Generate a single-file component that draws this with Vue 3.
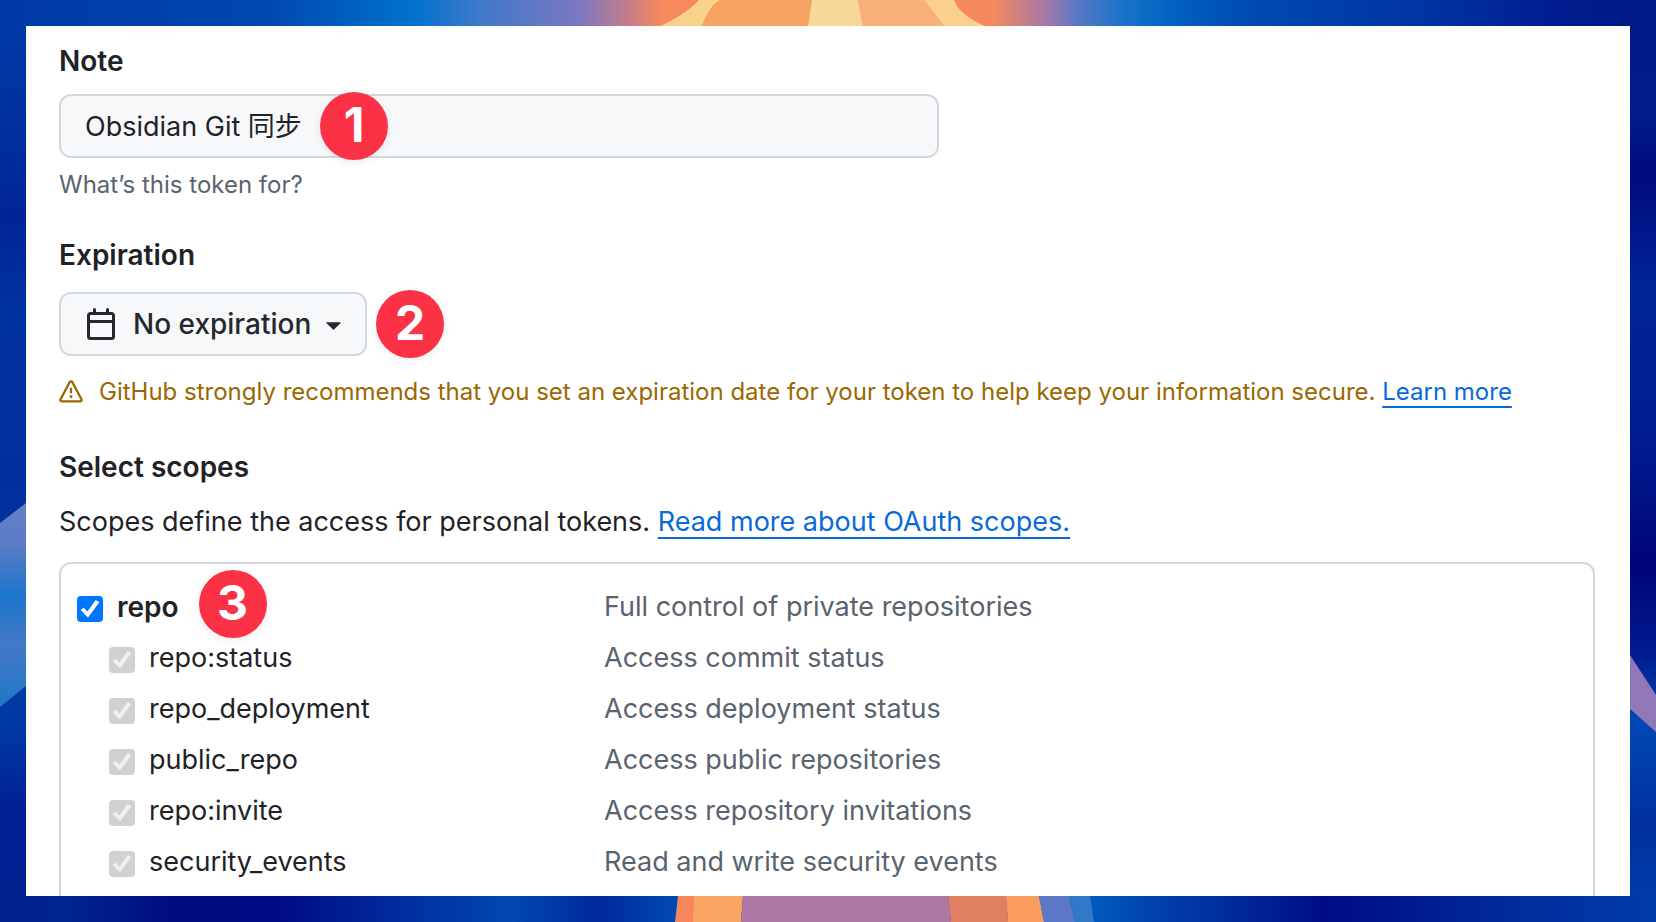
<template>
  <div class="desktop">
    <svg class="wallpaper" viewBox="0 0 1656 922" preserveAspectRatio="none" aria-hidden="true">
      <defs>
        <linearGradient id="topGlow">
          <stop offset="0" stop-color="#0039a6" />
          <stop offset="0.16" stop-color="#0047b0" />
          <stop offset="0.25" stop-color="#0072cc" />
          <stop offset="0.29" stop-color="#3f79c9" />
          <stop offset="0.35" stop-color="#7a78c0" />
          <stop offset="0.38" stop-color="#c87c88" />
          <stop offset="0.4" stop-color="#f78a5c" />
          <stop offset="0.6" stop-color="#f5885c" />
          <stop offset="0.63" stop-color="#a878a4" />
          <stop offset="0.65" stop-color="#5a78c6" />
          <stop offset="0.68" stop-color="#1672c8" />
          <stop offset="0.71" stop-color="#0060c0" />
          <stop offset="0.76" stop-color="#0048b2" />
          <stop offset="0.85" stop-color="#0036a4" />
          <stop offset="0.94" stop-color="#001c8e" />
          <stop offset="1" stop-color="#001a88" />
        </linearGradient>
        <linearGradient id="bottomGlow">
          <stop offset="0" stop-color="#002090" />
          <stop offset="0.04" stop-color="#002490" />
          <stop offset="0.11" stop-color="#000a80" />
          <stop offset="0.17" stop-color="#000c84" />
          <stop offset="0.25" stop-color="#0030a0" />
          <stop offset="0.31" stop-color="#0048b4" />
          <stop offset="0.36" stop-color="#00289c" />
          <stop offset="0.41" stop-color="#004ab2" />
          <stop offset="0.65" stop-color="#0060c4" />
          <stop offset="0.69" stop-color="#0046b0" />
          <stop offset="0.8" stop-color="#000c84" />
          <stop offset="0.92" stop-color="#002c9c" />
          <stop offset="1" stop-color="#003ca8" />
        </linearGradient>
        <linearGradient id="leftEdge" x2="0" y2="1">
          <stop offset="0" stop-color="#0039a6" />
          <stop offset="0.12" stop-color="#00309e" />
          <stop offset="0.22" stop-color="#002496" />
          <stop offset="0.32" stop-color="#00329e" />
          <stop offset="0.52" stop-color="#00309e" />
          <stop offset="0.8" stop-color="#003aa4" />
          <stop offset="0.9" stop-color="#002092" />
          <stop offset="1" stop-color="#002090" />
        </linearGradient>
        <linearGradient id="rightEdge" x2="0" y2="1">
          <stop offset="0" stop-color="#001a88" />
          <stop offset="0.1" stop-color="#001e8c" />
          <stop offset="0.17" stop-color="#000a80" />
          <stop offset="0.3" stop-color="#002494" />
          <stop offset="0.48" stop-color="#001c8e" />
          <stop offset="0.62" stop-color="#00047c" />
          <stop offset="0.72" stop-color="#001c8e" />
          <stop offset="0.8" stop-color="#0048b4" />
          <stop offset="0.92" stop-color="#00309e" />
          <stop offset="1" stop-color="#003ca8" />
        </linearGradient>
        <linearGradient id="leftRay" x2="0" y2="1">
          <stop offset="0" stop-color="#6480c8" />
          <stop offset="0.2" stop-color="#5c7cc6" />
          <stop offset="0.45" stop-color="#1c76ca" />
          <stop offset="0.7" stop-color="#4478c8" />
          <stop offset="1" stop-color="#1f78c8" />
        </linearGradient>
      </defs>
      <rect width="1656" height="26" fill="url(#topGlow)" />
      <rect y="896" width="1656" height="26" fill="url(#bottomGlow)" />
      <rect y="26" width="26" height="870" fill="url(#leftEdge)" />
      <rect x="1630" y="26" width="26" height="870" fill="url(#rightEdge)" />
      <!-- rays above the card -->
      <path d="M699 0H720C708 8 706 18 702 26H661C676 18 688 12 699 0Z" fill="#f9d38c" />
      <path d="M720 0H812L808 26H702C705 16 710 8 720 0Z" fill="#f7a463" />
      <path d="M812 0H858L863 26H808Z" fill="#f7d898" />
      <path d="M858 0H924L944 26H863Z" fill="#f9b078" />
      <path d="M924 0H954C960 14 972 20 985 26H944Z" fill="#f9d08c" />
      <!-- rays below the card -->
      <path d="M678 896H694V922H675Z" fill="#f6875a" />
      <path d="M694 896H743L741 922H693Z" fill="#faa562" />
      <path d="M743 896H948L951 922H741Z" fill="#ad78a4" />
      <path d="M948 896H1006L1008 922H951Z" fill="#e08060" />
      <path d="M1006 896H1039L1044 922H1008Z" fill="#fa9c5e" />
      <path d="M1039 896H1069L1075 922H1044Z" fill="#5a78c6" />
      <path d="M1069 896H1090L1094 922H1075Z" fill="#3278c8" />
      <!-- side rays -->
      <path d="M0 523L26 503V686L0 707Z" fill="url(#leftRay)" />
      <path d="M1630 655L1656 695V732L1630 709Z" fill="#9078b8" />
    </svg>

    <main class="card">
      <label class="heading" for="note">Note</label>
      <div class="note-field">
        <input id="note" v-model="note" class="note-input" type="text" />
        <span class="badge badge-note">1</span>
      </div>
      <p class="hint">What’s this token for?</p>

      <label class="heading heading-expiration" for="expiration">Expiration</label>
      <div class="expiration-field">
        <svg class="calendar" viewBox="0 0 16 16" aria-hidden="true">
          <path
            d="M4.75 0a.75.75 0 0 1 .75.75V2h5V.75a.75.75 0 0 1 1.5 0V2h1.25c.966 0 1.75.784 1.75 1.75v10.5A1.75 1.75 0 0 1 13.25 16H2.75A1.75 1.75 0 0 1 1 14.25V3.75C1 2.784 1.784 2 2.75 2H4V.75A.75.75 0 0 1 4.75 0ZM2.5 7.5v6.75c0 .138.112.25.25.25h10.5a.25.25 0 0 0 .25-.25V7.5Zm10.75-4H2.75a.25.25 0 0 0-.25.25V6h11V3.75a.25.25 0 0 0-.25-.25Z"
          />
        </svg>
        <select id="expiration" v-model="expiration" class="expiration-select">
          <option>No expiration</option>
        </select>
        <svg class="caret" viewBox="0 0 16 8" aria-hidden="true">
          <path d="M1 0h14a.6.6 0 0 1 .4 1L8.500 7.700a.7.7 0 0 1-1 0L.6 1A.6.6 0 0 1 1 0Z" />
        </svg>
        <span class="badge badge-expiration">2</span>
      </div>
      <p class="warning">
        <svg class="alert" viewBox="0 0 16 16" aria-hidden="true">
          <path
            d="M6.457 1.047c.659-1.234 2.427-1.234 3.086 0l6.082 11.378A1.75 1.75 0 0 1 14.082 15H1.918a1.75 1.75 0 0 1-1.543-2.575Zm1.763.707a.25.25 0 0 0-.44 0L1.698 13.132a.25.25 0 0 0 .22.368h12.164a.25.25 0 0 0 .22-.368Zm.53 3.996v2.5a.75.75 0 0 1-1.5 0v-2.5a.75.75 0 0 1 1.500 0ZM9 11a1 1 0 1 1-2 0 1 1 0 0 1 2 0Z"
          />
        </svg>
        <span>
          GitHub strongly recommends that you set an expiration date for your
          token to help keep your information secure.
          <a href="#">Learn more</a>
        </span>
      </p>

      <h2 class="heading heading-scopes">Select scopes</h2>
      <p class="intro">
        Scopes define the access for personal tokens.
        <a href="#">Read more about OAuth scopes.</a>
      </p>

      <ul class="scopes">
        <li
          v-for="scope in scopes"
          :key="scope.name"
          class="scope"
          :class="{ child: scope.child }"
        >
          <label class="scope-label">
            <input
              v-model="scope.checked"
              class="checkbox"
              type="checkbox"
              :disabled="scope.child"
            />
            {{ scope.name }}
            <span v-if="!scope.child" class="badge badge-scope">3</span>
          </label>
          <span class="description">{{ scope.description }}</span>
        </li>
      </ul>
    </main>
  </div>
</template>

<script setup>
import { ref } from "vue";

const note = ref("Obsidian Git 同步");
const expiration = ref("No expiration");

const scopes = ref([
  { name: "repo", description: "Full control of private repositories", checked: true, child: false },
  { name: "repo:status", description: "Access commit status", checked: true, child: true },
  { name: "repo_deployment", description: "Access deployment status", checked: true, child: true },
  { name: "public_repo", description: "Access public repositories", checked: true, child: true },
  { name: "repo:invite", description: "Access repository invitations", checked: true, child: true },
  { name: "security_events", description: "Read and write security events", checked: true, child: true },
]);
</script>

<style>
body {
  margin: 0;
}
</style>

<style scoped>
.desktop {
  position: relative;
  box-sizing: border-box;
  min-height: 100vh;
  padding: 26px;
  display: flex;
  background: #00309c;
  font-family: Inter, "Noto Sans CJK SC", sans-serif;
  font-size: 27px;
  line-height: 40px;
  color: #1f2328;
}

.wallpaper {
  position: absolute;
  top: 0;
  left: 0;
  width: 100%;
  height: 100%;
}

.card {
  position: relative;
  flex: 1;
  display: flex;
  flex-direction: column;
  align-items: flex-start;
  padding: 15px 35px 0 33px;
  background: #fff;
}

.heading {
  margin: 0;
  font-size: 28px;
  font-weight: 600;
}

.heading-expiration {
  margin-top: 32px;
}

.heading-scopes {
  margin-top: 37px;
}

.note-field {
  position: relative;
  width: 100%;
  max-width: 880px;
  margin-top: 13px;
}

.note-input {
  display: block;
  box-sizing: border-box;
  width: 100%;
  height: 64px;
  padding: 0 24px 4px;
  border: 2px solid #d1d9e0;
  border-radius: 12px;
  background: #f6f8fa;
  font: inherit;
  color: inherit;
}

.hint {
  margin: 9px 0 0;
  font-size: 24px;
  line-height: 36px;
  color: #59636e;
}

.expiration-field {
  position: relative;
  margin-top: 17px;
}

.expiration-select {
  display: block;
  height: 64px;
  padding: 0 53px 0 72px;
  border: 2px solid #d1d9e0;
  border-radius: 12px;
  background: #f6f8fa;
  appearance: none;
  font: inherit;
  font-size: 28px;
  font-weight: 500;
  color: #25292e;
}

.calendar {
  position: absolute;
  top: 16px;
  left: 26px;
  width: 32px;
  height: 32px;
  fill: #25292e;
}

.caret {
  position: absolute;
  top: 30px;
  right: 26px;
  width: 15px;
  height: 8px;
  fill: #25292e;
}

.warning {
  display: flex;
  align-items: center;
  gap: 16px;
  margin: 18px 0 0;
  font-size: 24px;
  line-height: 36px;
  color: #9a6700;
}

.alert {
  flex: none;
  width: 24px;
  height: 24px;
  fill: #9a6700;
}

a {
  color: #0969da;
  text-decoration: underline;
  text-decoration-thickness: 2px;
  text-underline-offset: 6px;
  text-decoration-skip-ink: none;
}

.intro {
  margin: 15px 0 0;
}

.scopes {
  box-sizing: border-box;
  flex: 1;
  width: 100%;
  margin: 20px 0 0;
  padding: 17px 16px 8px;
  border: 2px solid #d1d9e0;
  border-bottom: none;
  border-radius: 12px 12px 0 0;
  list-style: none;
}

.scope {
  display: grid;
  grid-template-columns: 527px 1fr;
  align-items: center;
  height: 51px;
}

.scope-label {
  position: relative;
  display: flex;
  align-items: center;
  justify-self: start;
  gap: 14px;
  font-size: 28px;
  font-weight: 600;
}

.child .scope-label {
  margin-left: 32px;
  font-size: 27px;
  font-weight: 400;
}

.checkbox {
  flex: none;
  width: 26px;
  height: 26px;
  margin: 5px 0 0;
  border-radius: 4px;
  background: #0075ff;
  appearance: none;
}

.checkbox:checked::before {
  content: "";
  display: block;
  width: 26px;
  height: 26px;
  background: #fff;
  clip-path: polygon(14% 54%, 26% 45%, 40% 60%, 72% 15%, 86% 24%, 42% 83%);
}

.checkbox:disabled {
  background: #d1d1d1;
}

.checkbox:disabled::before {
  background: #f0f0f0;
}

.description {
  color: #59636e;
}

.badge {
  position: absolute;
  width: 68px;
  height: 68px;
  border-radius: 50%;
  background: #fb3246;
  box-shadow: 0 2px 8px rgba(0, 0, 0, 0.08);
  font-size: 48px;
  font-weight: 700;
  line-height: 66px;
  text-align: center;
  color: #fff;
}

.badge-note {
  top: -2px;
  left: 261px;
}

.badge-expiration {
  top: -2px;
  left: 100%;
  margin-left: 9px;
}

.badge-scope {
  top: -17px;
  left: 100%;
  margin-left: 20px;
}
</style>
